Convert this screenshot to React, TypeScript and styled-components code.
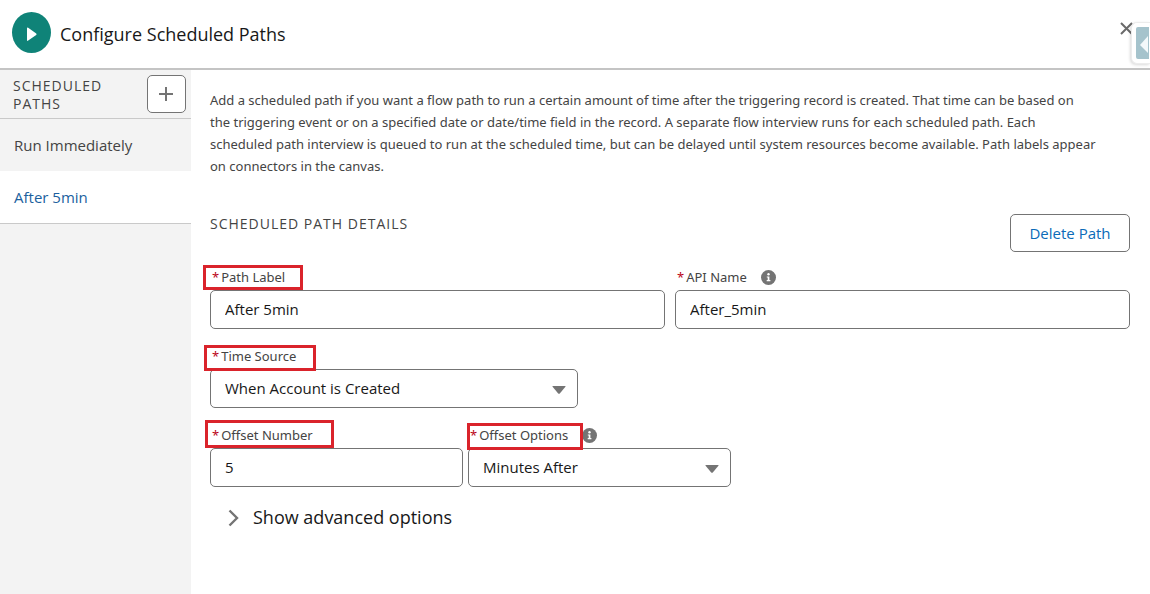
import React, { useState } from "react";
import styled, { createGlobalStyle } from "styled-components";

const GlobalStyle = createGlobalStyle`
  *, *::before, *::after { box-sizing: border-box; }
  body {
    margin: 0;
    background: #fff;
    color: #181818;
    font-family: "Open Sans", "Noto Sans", sans-serif;
    font-size: 13px;
  }
  button, input, select { font-family: inherit; color: inherit; margin: 0; }
`;

const smallFont = `"Noto Sans", "Open Sans", sans-serif`;

const Page = styled.div`
  position: relative;
  display: flex;
  flex-direction: column;
  min-height: 100vh;
  overflow: hidden;
`;

const Header = styled.header`
  display: flex;
  align-items: center;
  gap: 9px;
  height: 70px;
  padding: 0 0 4px 12px;
  border-bottom: 2px solid #c4c4c4;
`;

const Title = styled.h1`
  flex: 1;
  margin: 0;
  padding-top: 4px;
  font-size: 18px;
  line-height: 26px;
  font-weight: 400;
`;

const CloseButton = styled.button`
  display: flex;
  align-self: flex-start;
  margin: 21px 16px 0 0;
  padding: 0;
  border: 0;
  background: none;
  cursor: pointer;
`;

const DrawerTab = styled.button`
  position: absolute;
  top: 22px;
  right: 0;
  width: 19px;
  height: 42px;
  padding: 4px 1px 4px 4px;
  border: 1px solid #ececec;
  border-right: 0;
  border-radius: 6px 0 0 6px;
  background: #fff;
  box-shadow: -1px 1px 3px #00000026;
  cursor: pointer;
  svg { display: block; }
`;

const Body = styled.div`
  display: flex;
  flex: 1;
`;

const Sidebar = styled.aside`
  flex: 0 0 191px;
  background: #f3f3f3;
`;

const SidebarHead = styled.div`
  display: flex;
  align-items: center;
  justify-content: space-between;
  height: 49px;
  padding: 0 5px 0 13px;
  border-bottom: 1px solid #c9c9c9;
`;

const SectionTitle = styled.h2`
  margin: 0;
  padding-top: 1px;
  color: #444;
  font-size: 14px;
  line-height: 18px;
  font-weight: 400;
  letter-spacing: 1px;
  text-transform: uppercase;
`;

const OutlineButton = styled.button`
  display: flex;
  align-items: center;
  justify-content: center;
  min-width: 120px;
  height: 38px;
  padding: 0 18px;
  border: 1px solid #747474;
  border-radius: 5px;
  background: #fff;
  color: #0b6bb8;
  font-size: 15px;
  white-space: nowrap;
  cursor: pointer;
`;

const AddButton = styled(OutlineButton)`
  min-width: 39px;
  padding: 0;
`;

const PathItem = styled.button<{ $active?: boolean }>`
  display: block;
  width: 100%;
  height: ${(p) => (p.$active ? 53 : 52)}px;
  padding: 0 14px;
  border: 0;
  border-bottom: ${(p) => (p.$active ? "1px solid #c9c9c9" : "0")};
  background: ${(p) => (p.$active ? "#fff" : "#f3f3f3")};
  && { color: ${(p) => (p.$active ? "#1b5f9e" : "#444")}; }
  font-size: 15px;
  text-align: left;
  cursor: pointer;
`;

const Main = styled.main`
  flex: 1;
  min-width: 0;
  padding: 19px 20px 20px 19px;
`;

const Intro = styled.p`
  margin: 0;
  color: #444;
  font-family: ${smallFont};
  font-size: 13px;
  line-height: 22px;
`;

const DetailsHead = styled.div`
  display: flex;
  align-items: flex-start;
  justify-content: space-between;
  margin-top: 37px;
`;

const Form = styled.form`
  display: flex;
  flex-direction: column;
  gap: 13px;
  padding-top: 11px;
`;

const Row = styled.div<{ $columns: string; $gap: number }>`
  display: grid;
  grid-template-columns: ${(p) => p.$columns};
  column-gap: ${(p) => p.$gap}px;
`;

const LabelRow = styled.div`
  position: relative;
  display: flex;
  align-items: center;
  gap: 14px;
  height: 27px;
  padding-left: 2px;
  svg { margin-top: 1px; }
`;

const Label = styled.label`
  color: #444;
  font-family: ${smallFont};
  font-size: 13px;
  line-height: 20px;
`;

const Asterisk = styled.span`
  margin-right: 2px;
  color: #ba0517;
`;

const Highlight = styled.span<{ $left: number; $top: number; $width: number; $height: number }>`
  position: absolute;
  z-index: 1;
  left: ${(p) => p.$left}px;
  top: ${(p) => p.$top}px;
  width: ${(p) => p.$width}px;
  height: ${(p) => p.$height}px;
  border: 3px solid #da232b;
  pointer-events: none;
`;

const TextInput = styled.input`
  display: block;
  width: 100%;
  height: 39px;
  padding: 0 14px 2px;
  border: 1px solid #747474;
  border-radius: 5px;
  background: #fff;
  font-size: 15px;
`;

const SelectWrap = styled.div`
  position: relative;
  svg {
    position: absolute;
    right: 12px;
    top: 17px;
    pointer-events: none;
  }
`;

const Select = styled.select`
  display: block;
  appearance: none;
  width: 100%;
  height: 39px;
  padding: 0 32px 2px 14px;
  border: 1px solid #747474;
  border-radius: 5px;
  background: #fff;
  font-size: 15px;
`;

const AdvancedToggle = styled.button`
  display: flex;
  align-items: center;
  gap: 13px;
  margin-top: 17px;
  padding: 0 0 0 18px;
  border: 0;
  background: none;
  font-size: 18px;
  line-height: 26px;
  cursor: pointer;
  svg { margin-top: 2px; }
`;

const Caret = () => (
  <svg width="14" height="8" viewBox="0 0 14 8" aria-hidden="true">
    <path d="M1 0h12q1 0 .4.8L7.8 7.4q-.8.9-1.6 0L.6.8Q0 0 1 0z" fill="#747474" />
  </svg>
);

const InfoIcon = () => (
  <svg width="15" height="15" viewBox="0 0 15 15" role="img" aria-label="Help">
    <circle cx="7.5" cy="7.5" r="7.5" fill="#747474" />
    <circle cx="7.5" cy="4.3" r="1.2" fill="#fff" />
    <path d="M5.8 6.5h2.6v3.6h1v1.2H5.7v-1.2h1V7.6h-.9z" fill="#fff" />
  </svg>
);

type Box = [left: number, top: number, width: number, height: number];

interface FieldProps {
  id: string;
  label: string;
  box?: Box;
  info?: boolean;
  children: React.ReactNode;
}

const Field = ({ id, label, box, info, children }: FieldProps) => (
  <div>
    <LabelRow>
      <Label htmlFor={id}>
        <Asterisk>*</Asterisk>
        {label}
      </Label>
      {info && <InfoIcon />}
      {box && <Highlight $left={box[0]} $top={box[1]} $width={box[2]} $height={box[3]} />}
    </LabelRow>
    {children}
  </div>
);

const Dropdown = ({ id, options }: { id: string; options: string[] }) => (
  <SelectWrap>
    <Select id={id}>
      {options.map((o) => (
        <option key={o}>{o}</option>
      ))}
    </Select>
    <Caret />
  </SelectWrap>
);

export default function App() {
  const [open, setOpen] = useState(false);
  return (
    <>
      <GlobalStyle />
      <Page>
        <Header>
          <svg width="39" height="41" viewBox="0 0 39 41" aria-hidden="true">
            <ellipse cx="19.5" cy="20.5" rx="19.5" ry="20.5" fill="#0f8378" />
            <path d="M15 16.4q0-1.4 1.2-.6l8 5.8q.8.7 0 1.4l-8 5.6q-1.2.8-1.2-.6z" fill="#fff" />
          </svg>
          <Title>Configure Scheduled Paths</Title>
          <CloseButton type="button" aria-label="Close">
            <svg width="15" height="15" viewBox="0 0 15 15" fill="none" stroke="#6a6a6a" strokeWidth="2">
              <path d="M2 2l11 11M13 2L2 13" />
            </svg>
          </CloseButton>
        </Header>
        <DrawerTab type="button" aria-label="Open panel">
          <svg width="13" height="32" viewBox="0 0 13 32">
            <rect width="15" height="32" rx="2" fill="#a5c3cc" />
            <path d="M4 18L12 9V26z" fill="#f3f8fa" />
          </svg>
        </DrawerTab>
        <Body>
          <Sidebar>
            <SidebarHead>
              <SectionTitle>
                Scheduled
                <br />
                Paths
              </SectionTitle>
              <AddButton type="button" aria-label="Add scheduled path">
                <svg width="15" height="14" viewBox="0 0 15 14" stroke="#747474" strokeWidth="2">
                  <path d="M7 0v14M0 7h14" />
                </svg>
              </AddButton>
            </SidebarHead>
            <nav aria-label="Scheduled paths">
              <PathItem type="button">Run Immediately</PathItem>
              <PathItem type="button" $active>
                After 5min
              </PathItem>
            </nav>
          </Sidebar>
          <Main>
            <Intro>
              Add a scheduled path if you want a flow path to run a certain amount of time after the
              triggering record is created. That time can be based on
              <br />
              the triggering event or on a specified date or date/time field in the record. A separate
              flow interview runs for each scheduled path. Each
              <br />
              scheduled path interview is queued to run at the scheduled time, but can be delayed until
              system resources become available. Path labels appear
              <br />
              on connectors in the canvas.
            </Intro>
            <DetailsHead>
              <SectionTitle>Scheduled Path Details</SectionTitle>
              <OutlineButton type="button">Delete Path</OutlineButton>
            </DetailsHead>
            <Form onSubmit={(e) => e.preventDefault()}>
              <Row $columns="1fr 1fr" $gap={10}>
                <Field id="path-label" label="Path Label" box={[-7, 2, 100, 25]}>
                  <TextInput id="path-label" defaultValue="After 5min" />
                </Field>
                <Field id="api-name" label="API Name" info>
                  <TextInput id="api-name" defaultValue="After_5min" />
                </Field>
              </Row>
              <Row $columns="40% 1fr" $gap={0}>
                <Field id="time-source" label="Time Source" box={[-6, 3, 112, 26]}>
                  <Dropdown id="time-source" options={["When Account is Created"]} />
                </Field>
              </Row>
              <Row $columns="253px 263px" $gap={5}>
                <Field id="offset-number" label="Offset Number" box={[-5, -1, 129, 28]}>
                  <TextInput id="offset-number" defaultValue="5" />
                </Field>
                <Field id="offset-options" label="Offset Options" info box={[-1, 2, 116, 27]}>
                  <Dropdown id="offset-options" options={["Minutes After"]} />
                </Field>
              </Row>
            </Form>
            <AdvancedToggle type="button" aria-expanded={open} onClick={() => setOpen(!open)}>
              <svg width="12" height="18" viewBox="0 0 12 18" fill="none" stroke="#747474" strokeWidth="2.4">
                <path d="M1.500 1.500L9 9l-7.500 7.500" />
              </svg>
              Show advanced options
            </AdvancedToggle>
          </Main>
        </Body>
      </Page>
    </>
  );
}
